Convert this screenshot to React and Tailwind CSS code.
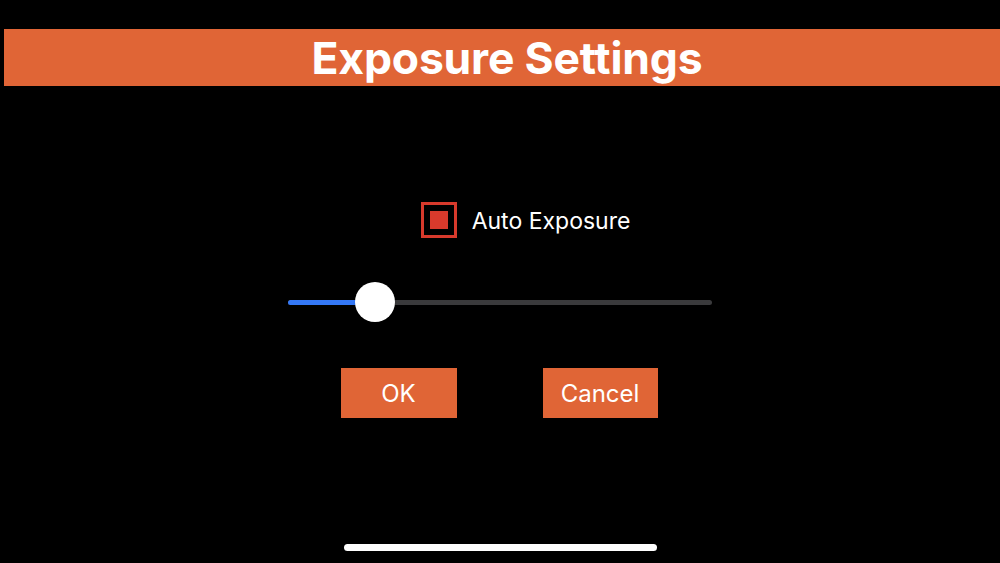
export default function App() {
  const value = 0.205;

  return (
    <div className="h-[563px] w-[1000px] bg-black flex flex-col overflow-hidden" style={{ fontFamily: 'Inter, "Liberation Sans", sans-serif' }}>
      {/* Title bar */}
      <div className="mt-[29px] ml-[4px] h-[57px] bg-[#e06536] flex items-center justify-center">
        <h1 className="ml-[10px] pt-[1px] text-[44.5px] font-bold text-white tracking-[-0.2px] leading-none">Exposure Settings</h1>
      </div>

      <div className="flex flex-col items-center">
        {/* Auto exposure checkbox */}
        <div className="mt-[116px] ml-[51px] flex items-center gap-[15px]">
          <div className="w-[36px] h-[36px] border-[3px] border-[#d83a2c] flex items-center justify-center">
            <div className="w-[18px] h-[18px] bg-[#d83a2c]" />
          </div>
          <span className="pt-[3px] text-[23px] text-white leading-none">Auto Exposure</span>
        </div>

        {/* Slider */}
        <div className="mt-[44px] w-[424px] h-[40px] relative flex items-center">
          <div className="w-full h-[5px] rounded-full bg-[#3a3a3c] flex">
            <div className="h-full rounded-full bg-[#3478f6]" style={{ width: `${value * 100}%` }} />
          </div>
          <div
            className="absolute top-0 w-[40px] h-[40px] rounded-full bg-white shadow"
            style={{ left: `calc(${value * 100}% - 20px)` }}
          />
        </div>

        {/* Buttons */}
        <div className="mt-[46px] mr-[2px] flex gap-[86px]">
          <button className="w-[116px] h-[50px] pt-[2px] bg-[#e06536] text-white text-[24px]">OK</button>
          <button className="w-[115px] h-[50px] pt-[2px] bg-[#e06536] text-white text-[24px]">Cancel</button>
        </div>
      </div>

      {/* Home indicator */}
      <div className="mt-auto mb-[12px] mx-auto w-[313px] h-[7px] rounded-full bg-white" />
    </div>
  );
}
